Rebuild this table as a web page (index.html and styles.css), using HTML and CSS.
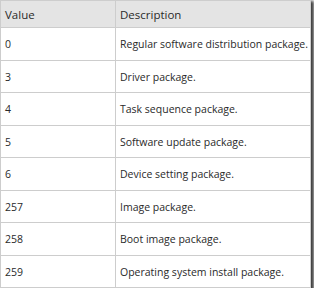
FILE: index.html
```html
<!DOCTYPE html>
<html lang="en">
<head>
  <meta charset="UTF-8">
  <title>Package types</title>
  <link rel="stylesheet" href="styles.css">
</head>
<body class="page">
  <table class="grid">
    <colgroup>
      <col class="grid__col--value">
      <col>
    </colgroup>
    <thead>
      <tr class="grid__head">
        <th class="grid__cell">Value</th>
        <th class="grid__cell">Description</th>
      </tr>
    </thead>
    <tbody>
      <tr class="grid__row"><td class="grid__cell">0</td><td class="grid__cell">Regular software distribution package.</td></tr>
      <tr class="grid__row"><td class="grid__cell">3</td><td class="grid__cell">Driver package.</td></tr>
      <tr class="grid__row"><td class="grid__cell">4</td><td class="grid__cell">Task sequence package.</td></tr>
      <tr class="grid__row"><td class="grid__cell">5</td><td class="grid__cell">Software update package.</td></tr>
      <tr class="grid__row"><td class="grid__cell">6</td><td class="grid__cell">Device setting package.</td></tr>
      <tr class="grid__row"><td class="grid__cell">257</td><td class="grid__cell">Image package.</td></tr>
      <tr class="grid__row"><td class="grid__cell">258</td><td class="grid__cell">Boot image package.</td></tr>
      <tr class="grid__row"><td class="grid__cell">259</td><td class="grid__cell">Operating system install package.</td></tr>
    </tbody>
  </table>
</body>
</html>
```

FILE: styles.css
```css
*, *::before, *::after {
  box-sizing: border-box;
}

.page {
  margin: 0;
  background: #ffffff;
  font-family: "Open Sans", "Noto Sans", sans-serif;
  font-size: 10.5px;
  color: #2a2a2a;
}

.grid {
  width: 311px;
  table-layout: fixed;
  border-collapse: collapse;
  box-shadow: 2px 2px 3px 1px #3c3c3c;
}

.grid__col--value {
  width: 115px;
}

.grid__cell {
  border: 1px solid #cdcdcd;
  padding: 0 4px;
  text-align: left;
  font-weight: normal;
  white-space: nowrap;
}

.grid__head {
  height: 27px;
  background: #e4e4e4;
  font-size: 11.5px;
}

.grid__row {
  height: 32px;
}

.grid__row:nth-child(odd) {
  height: 33px;
}
```
